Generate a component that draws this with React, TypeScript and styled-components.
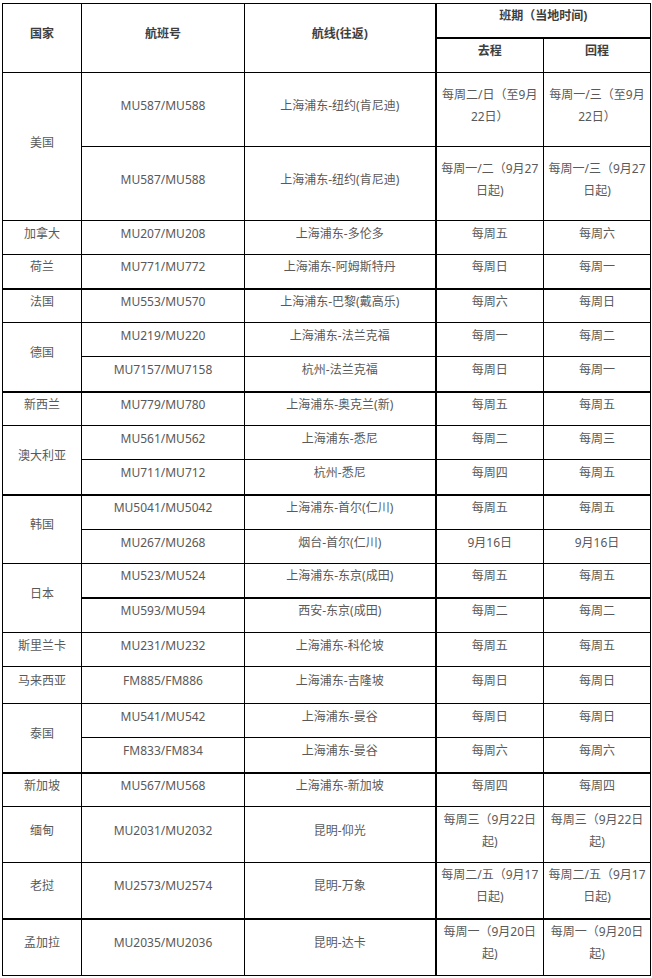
import React from "react";
import styled, { createGlobalStyle } from "styled-components";

const GlobalStyle = createGlobalStyle`
  body {
    margin: 0;
    background: #fff;
  }
`;

const Page = styled.div`
  padding: 3px 2px 0 2px;
`;

const Table = styled.table`
  width: 648px;
  border-collapse: collapse;
  table-layout: fixed;
  font-family: "Noto Sans", "Noto Sans CJK SC", sans-serif;
  font-size: 12px;
  line-height: 22px;
  color: #595959;
`;

const Row = styled.tr<{ $h: number }>`
  height: ${(p) => p.$h}px;
`;

const Cell = styled.td<{ $thick?: boolean; $split?: boolean }>`
  border: 1px solid #000;
  border-bottom-width: ${(p) => (p.$thick ? 2 : 1)}px;
  border-left-width: ${(p) => (p.$split ? 2 : 1)}px;
  padding: 0 4px 8px;
  text-align: center;
  vertical-align: middle;
  white-space: pre;
  overflow: hidden;
`;

const HeadCell = styled(Cell).attrs({ as: "th" })`
  font-weight: bold;
  color: #3e3e3e;
`;

type Flight = {
  flight: string;
  route: string;
  out: string;
  back: string;
  h: number;
  thick?: boolean;
};

type Group = {
  country: string;
  thick?: boolean;
  rows: Flight[];
};

const groups: Group[] = [
  {
    country: "美国",
    rows: [
      { flight: "MU587/MU588", route: "上海浦东-纽约(肯尼迪)", out: "每周二/日（至9月\n22日）", back: "每周一/三（至9月\n22日）", h: 74 },
      { flight: "MU587/MU588", route: "上海浦东-纽约(肯尼迪)", out: "每周一/二（9月27\n日起)", back: "每周一/三（9月27\n日起)", h: 74 },
    ],
  },
  { country: "加拿大", rows: [{ flight: "MU207/MU208", route: "上海浦东-多伦多", out: "每周五", back: "每周六", h: 34 }] },
  { country: "荷兰", thick: true, rows: [{ flight: "MU771/MU772", route: "上海浦东-阿姆斯特丹", out: "每周日", back: "每周一", h: 34 }] },
  { country: "法国", rows: [{ flight: "MU553/MU570", route: "上海浦东-巴黎(戴高乐)", out: "每周六", back: "每周日", h: 34 }] },
  {
    country: "德国",
    thick: true,
    rows: [
      { flight: "MU219/MU220", route: "上海浦东-法兰克福", out: "每周一", back: "每周二", h: 34 },
      { flight: "MU7157/MU7158", route: "杭州-法兰克福", out: "每周日", back: "每周一", h: 35 },
    ],
  },
  { country: "新西兰", rows: [{ flight: "MU779/MU780", route: "上海浦东-奥克兰(新)", out: "每周五", back: "每周五", h: 34 }] },
  {
    country: "澳大利亚",
    thick: true,
    rows: [
      { flight: "MU561/MU562", route: "上海浦东-悉尼", out: "每周二", back: "每周三", h: 34 },
      { flight: "MU711/MU712", route: "杭州-悉尼", out: "每周四", back: "每周五", h: 35 },
    ],
  },
  {
    country: "韩国",
    rows: [
      { flight: "MU5041/MU5042", route: "上海浦东-首尔(仁川)", out: "每周五", back: "每周五", h: 35 },
      { flight: "MU267/MU268", route: "烟台-首尔(仁川)", out: "9月16日", back: "9月16日", h: 34 },
    ],
  },
  {
    country: "日本",
    rows: [
      { flight: "MU523/MU524", route: "上海浦东-东京(成田)", out: "每周五", back: "每周五", h: 34, thick: true },
      { flight: "MU593/MU594", route: "西安-东京(成田)", out: "每周二", back: "每周二", h: 35 },
    ],
  },
  { country: "斯里兰卡", rows: [{ flight: "MU231/MU232", route: "上海浦东-科伦坡", out: "每周五", back: "每周五", h: 34 }] },
  { country: "马来西亚", rows: [{ flight: "FM885/FM886", route: "上海浦东-吉隆坡", out: "每周日", back: "每周日", h: 37 }] },
  {
    country: "泰国",
    thick: true,
    rows: [
      { flight: "MU541/MU542", route: "上海浦东-曼谷", out: "每周日", back: "每周日", h: 34 },
      { flight: "FM833/FM834", route: "上海浦东-曼谷", out: "每周六", back: "每周六", h: 35 },
    ],
  },
  { country: "新加坡", rows: [{ flight: "MU567/MU568", route: "上海浦东-新加坡", out: "每周四", back: "每周四", h: 34 }] },
  { country: "缅甸", rows: [{ flight: "MU2031/MU2032", route: "昆明-仰光", out: "每周三（9月22日\n起)", back: "每周三（9月22日\n起)", h: 56 }] },
  { country: "老挝", thick: true, rows: [{ flight: "MU2573/MU2574", route: "昆明-万象", out: "每周二/五（9月17\n日起)", back: "每周二/五（9月17\n日起)", h: 56 }] },
  { country: "孟加拉", rows: [{ flight: "MU2035/MU2036", route: "昆明-达卡", out: "每周一（9月20日\n起)", back: "每周一（9月20日\n起)", h: 57 }] },
];

const App = () => {
  return (
    <Page>
      <GlobalStyle />
      <Table>
        <colgroup>
          <col style={{ width: 79 }} />
          <col style={{ width: 163 }} />
          <col style={{ width: 191 }} />
          <col style={{ width: 108 }} />
          <col style={{ width: 107 }} />
        </colgroup>
        <thead>
          <Row $h={34}>
            <HeadCell rowSpan={2}>国家</HeadCell>
            <HeadCell rowSpan={2}>航班号</HeadCell>
            <HeadCell rowSpan={2}>航线(往返)</HeadCell>
            <HeadCell colSpan={2} $split $thick>
              班期（当地时间)
            </HeadCell>
          </Row>
          <Row $h={35}>
            <HeadCell $split>去程</HeadCell>
            <HeadCell>回程</HeadCell>
          </Row>
        </thead>
        <tbody>
          {groups.map((g) =>
            g.rows.map((r, i) => {
              const last = i === g.rows.length - 1;
              const thick = r.thick || (g.thick && last);
              return (
                <Row key={g.country + i} $h={r.h}>
                  {i === 0 && (
                    <Cell rowSpan={g.rows.length} $thick={g.thick}>
                      {g.country}
                    </Cell>
                  )}
                  <Cell $thick={thick}>{r.flight}</Cell>
                  <Cell $thick={thick}>{r.route}</Cell>
                  <Cell $thick={thick} $split>
                    {r.out}
                  </Cell>
                  <Cell $thick={thick}>{r.back}</Cell>
                </Row>
              );
            })
          )}
        </tbody>
      </Table>
    </Page>
  );
};

export default App;
